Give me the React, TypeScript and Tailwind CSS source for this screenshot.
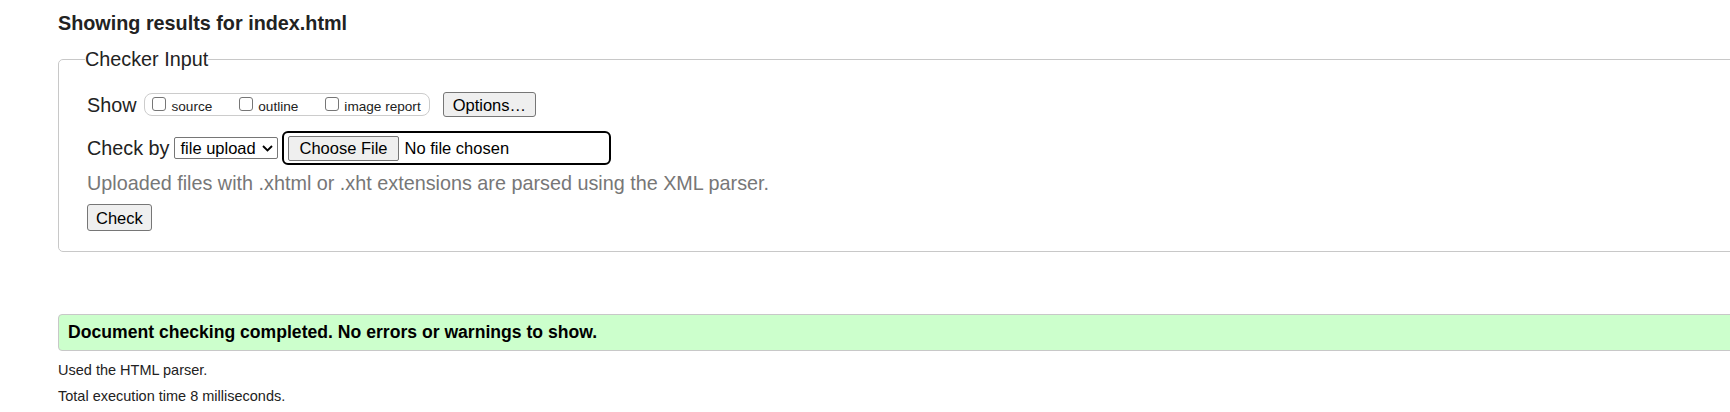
import React from 'react';

const options = [
  { id: 'source', label: 'source' },
  { id: 'outline', label: 'outline' },
  { id: 'image', label: 'image report' },
];

const Checkbox: React.FC = () => (
  <span className="inline-block w-[14px] h-[14px] mb-[2px] rounded-[3px] border border-[#767676] bg-white" />
);

const Chevron: React.FC = () => (
  <svg width="11" height="7" viewBox="0 0 11 7" className="ml-[6px]">
    <polyline points="1,1 5.5,5.5 10,1" fill="none" stroke="#000" strokeWidth="1.8" />
  </svg>
);

const App: React.FC = () => {
  return (
    <div className="w-full h-[412px] overflow-hidden bg-white text-[#222] font-['Liberation_Sans',Arial,sans-serif]">
      <div className="w-[1800px] pl-[58px]">
        <h2 className="pt-[11px] text-[19.8px] leading-[24px] font-bold">Showing results for index.html</h2>

        <fieldset className="mt-[12px] border border-[#c8c8c8] rounded-[5px] pl-[28px] pb-[20px]">
          <legend className="ml-[-2px] text-[19.8px] leading-[24px]">Checker Input</legend>

          <div className="pt-[21px] flex items-center h-[46px]">
            <span className="text-[19.8px] leading-[24px] mr-[8px]">Show</span>
            <div className="flex items-center h-[23px] border border-[#ccc] rounded-[8px] pl-[7px] pr-[8px] gap-[27px]">
              {options.map(o => (
                <label key={o.id} className="flex items-baseline gap-[5px] pt-[2px] text-[13.6px] leading-[16px]">
                  <Checkbox />
                  <span>{o.label}</span>
                </label>
              ))}
            </div>
            <button className="ml-[13px] h-[25px] px-[9px] border border-[#767676] rounded-[3px] bg-[#efefef] text-[16.5px] leading-[20px] text-black">
              Options…
            </button>
          </div>

          <div className="mt-[14px] flex items-center h-[34px]">
            <span className="text-[19.8px] leading-[24px] mr-[5px]">Check by</span>
            <div className="flex items-center h-[22px] w-[104px] pl-[5px] border border-[#767676] rounded-[2px] text-[16.5px] leading-[20px] text-black">
              <span>file upload</span>
              <Chevron />
            </div>
            <div className="ml-[4px] flex items-center h-[34px] w-[329px] border-2 border-black rounded-[6px] pl-[4px] text-[16.5px] leading-[20px] text-black">
              <button className="h-[25px] px-[10px] border border-[#767676] rounded-[2px] bg-[#efefef]">Choose File</button>
              <span className="ml-[6px]">No file chosen</span>
            </div>
          </div>

          <p className="mt-[6px] text-[19.8px] leading-[24px] text-[#777]">
            Uploaded files with .xhtml or .xht extensions are parsed using the XML parser.
          </p>

          <button className="mt-[9px] h-[27px] px-[8px] border border-[#767676] rounded-[3px] bg-[#efefef] text-[16.5px] leading-[20px] text-black">
            Check
          </button>
        </fieldset>

        <div className="mt-[62px] h-[37px] flex items-center px-[9px] border border-[#c8c8c8] rounded-[4px] bg-[#ccffcc] text-[17.6px] font-bold text-black">
          Document checking completed. No errors or warnings to show.
        </div>

        <p className="mt-[7px] text-[14.5px] leading-[25px]">Used the HTML parser.</p>
        <p className="mt-[1px] text-[14.5px] leading-[25px]">Total execution time 8 milliseconds.</p>
      </div>
    </div>
  );
};

export default App;
